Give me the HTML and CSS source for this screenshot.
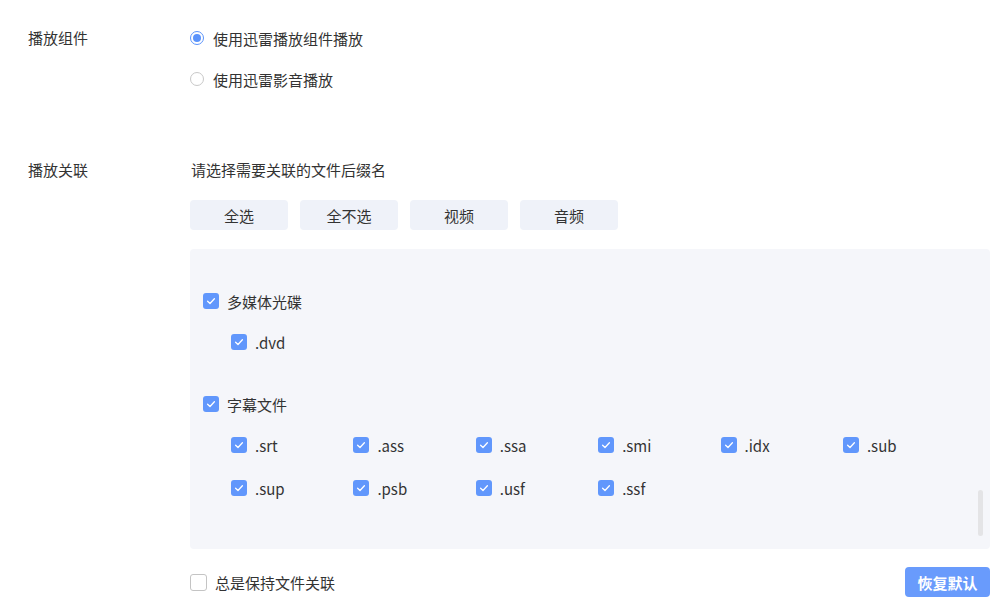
FILE: index.html
```html
<!DOCTYPE html>
<html>
<head>
<meta charset="utf-8">
<link rel="stylesheet" href="styles.css">
</head>
<body>
<div class="page">
  <section class="row row-player">
    <div class="label">播放组件</div>
    <div class="content">
      <div class="radio-line"><span class="radio on"></span><span>使用迅雷播放组件播放</span></div>
      <div class="radio-line"><span class="radio"></span><span>使用迅雷影音播放</span></div>
    </div>
  </section>
  <section class="row row-assoc">
    <div class="label">播放关联</div>
    <div class="content">
      <div class="desc">请选择需要关联的文件后缀名</div>
      <div class="btns">
        <button class="btn">全选</button>
        <button class="btn">全不选</button>
        <button class="btn">视频</button>
        <button class="btn">音频</button>
      </div>
      <div class="panel">
        <div class="group">
          <div class="cb-line"><span class="cb"><svg viewBox="0 0 16 16"><path d="M4.6 8.2 L7 10.5 L11.4 5.8"/></svg></span><span>多媒体光碟</span></div>
          <div class="items">
            <div class="cb-line"><span class="cb"><svg viewBox="0 0 16 16"><path d="M4.6 8.2 L7 10.5 L11.4 5.8"/></svg></span><span>.dvd</span></div>
          </div>
        </div>
        <div class="group group2">
          <div class="cb-line"><span class="cb"><svg viewBox="0 0 16 16"><path d="M4.6 8.2 L7 10.5 L11.4 5.8"/></svg></span><span>字幕文件</span></div>
          <div class="items">
            <div class="cb-line"><span class="cb"><svg viewBox="0 0 16 16"><path d="M4.6 8.2 L7 10.5 L11.4 5.8"/></svg></span><span>.srt</span></div>
            <div class="cb-line"><span class="cb"><svg viewBox="0 0 16 16"><path d="M4.6 8.2 L7 10.5 L11.4 5.8"/></svg></span><span>.ass</span></div>
            <div class="cb-line"><span class="cb"><svg viewBox="0 0 16 16"><path d="M4.6 8.2 L7 10.5 L11.4 5.8"/></svg></span><span>.ssa</span></div>
            <div class="cb-line"><span class="cb"><svg viewBox="0 0 16 16"><path d="M4.6 8.2 L7 10.5 L11.4 5.8"/></svg></span><span>.smi</span></div>
            <div class="cb-line"><span class="cb"><svg viewBox="0 0 16 16"><path d="M4.6 8.2 L7 10.5 L11.4 5.8"/></svg></span><span>.idx</span></div>
            <div class="cb-line"><span class="cb"><svg viewBox="0 0 16 16"><path d="M4.6 8.2 L7 10.5 L11.4 5.8"/></svg></span><span>.sub</span></div>
            <div class="cb-line"><span class="cb"><svg viewBox="0 0 16 16"><path d="M4.6 8.2 L7 10.5 L11.4 5.8"/></svg></span><span>.sup</span></div>
            <div class="cb-line"><span class="cb"><svg viewBox="0 0 16 16"><path d="M4.6 8.2 L7 10.5 L11.4 5.8"/></svg></span><span>.psb</span></div>
            <div class="cb-line"><span class="cb"><svg viewBox="0 0 16 16"><path d="M4.6 8.2 L7 10.5 L11.4 5.8"/></svg></span><span>.usf</span></div>
            <div class="cb-line"><span class="cb"><svg viewBox="0 0 16 16"><path d="M4.6 8.2 L7 10.5 L11.4 5.8"/></svg></span><span>.ssf</span></div>
          </div>
        </div>
        <div class="scroll-thumb"></div>
      </div>
      <div class="footer">
        <div class="cb-line"><span class="cb off"></span><span>总是保持文件关联</span></div>
        <button class="primary">恢复默认</button>
      </div>
    </div>
  </section>
</div>
</body>
</html>
```
FILE: styles.css
```css
* { box-sizing: border-box; }
html, body { margin: 0; padding: 0; background: #fff; }
body {
  font-family: "Microsoft YaHei", "Noto Sans CJK SC", "Liberation Sans", sans-serif;
  font-size: 15px;
  color: #333;
  width: 1004px;
  height: 613px;
  overflow: hidden;
}
.page { padding-top: 28px; }
.row { display: flex; }
.label { width: 190px; padding-left: 28px; line-height: 20px; }
.content { flex: 1; padding-right: 14px; }
.row-assoc { margin-top: 71px; }

.radio-line { display: flex; align-items: center; height: 20px; gap: 9px; }
.radio-line + .radio-line { margin-top: 21px; }
.radio {
  width: 14px; height: 14px; border-radius: 50%;
  border: 1px solid #c8c8c8; background: #fff; position: relative; flex: none;
}
.radio.on { border-color: #5b93fb; }
.radio.on::after {
  content: ""; position: absolute; left: 2px; top: 2px;
  width: 8px; height: 8px; border-radius: 50%; background: #5b93fb;
}

.desc { line-height: 20px; padding-left: 1px; }
.btns { display: flex; gap: 12px; margin-top: 20px; }
.btn {
  width: 98px; height: 30px; border: none; border-radius: 4px;
  background: #eff2f9; color: #333; font: inherit; padding: 0;
}

.panel {
  position: relative;
  margin-top: 19px; height: 300px; background: #f5f6fa; border-radius: 4px;
  padding: 42px 0 0 13px;
}
.group2 { margin-top: 42px; }
.items {
  display: grid; grid-template-columns: repeat(6, 122.4px);
  row-gap: 23px; margin-top: 21px; padding-left: 28px;
}
.cb-line { display: flex; align-items: center; height: 20px; gap: 8px; }
.cb {
  width: 16px; height: 16px; border-radius: 3px; background: #6197fc; flex: none;
  display: flex;
}
.cb svg { width: 16px; height: 16px; fill: none; stroke: #fff; stroke-width: 1.3; stroke-linecap: round; stroke-linejoin: round; }
.cb.off { width: 17px; height: 17px; background: #fff; border: 1px solid #c4c4c4; border-radius: 3px; }
.scroll-thumb {
  position: absolute; right: 7px; top: 241px; width: 5px; height: 46px;
  border-radius: 3px; background: #e4e4e6;
}

.footer { display: flex; justify-content: space-between; align-items: center; margin-top: 18px; }
.primary {
  width: 85px; height: 30px; border: none; border-radius: 4px;
  background: #699bfc; color: #fff; font: inherit; font-weight: bold; padding: 0;
}
```
